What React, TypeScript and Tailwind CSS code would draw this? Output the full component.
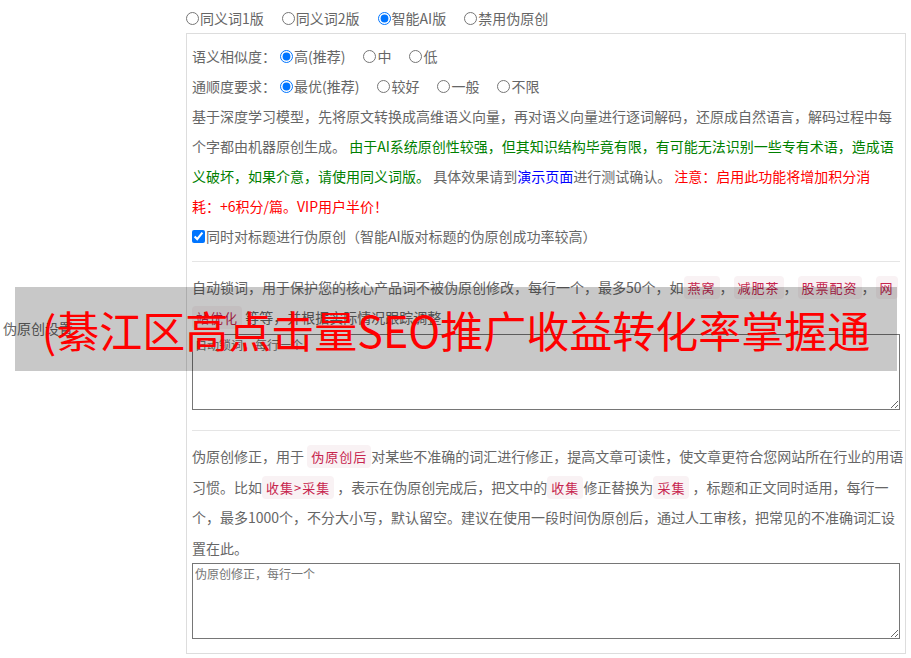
import React from "react";

function Radio({ name, label, checked }: { name: string; label: string; checked?: boolean }) {
  return (
    <label className="inline-flex items-center mr-[18px]">
      <input type="radio" name={name} defaultChecked={checked} className="m-0 mr-[1px] w-[13px] h-[13px]" />
      <span>{label}</span>
    </label>
  );
}

function Code({ children }: { children: React.ReactNode }) {
  return (
    <span className="bg-[#f9f2f4] text-[#c7254e] rounded-[4px] px-[4px] py-[2px] text-[13px] leading-none tracking-[1px]">
      {children}
    </span>
  );
}

export default function App() {
  return (
    <div className="relative w-[911px] h-[658px] bg-white text-[#666] text-[14px] font-['Noto_Sans_CJK_SC','Noto_Sans',sans-serif] overflow-hidden">
      <div className="flex">
        <div className="w-[186px] shrink-0 flex items-center pl-[3px] pt-[2px]">伪原创设置</div>
        <div className="w-[720px] shrink-0">
          <div className="mt-[3px] h-[30px] flex items-center">
            <Radio name="ver" label="同义词1版" />
            <Radio name="ver" label="同义词2版" />
            <Radio name="ver" label="智能AI版" checked />
            <Radio name="ver" label="禁用伪原创" />
          </div>
          <div className="border border-[#ddd] px-[5px] pt-[7px] pb-[14px]">
            <div className="h-[30px] flex items-center">
              <span className="mr-[4px]">语义相似度：</span>
              <Radio name="sim" label="高(推荐)" checked />
              <Radio name="sim" label="中" />
              <Radio name="sim" label="低" />
            </div>
            <div className="h-[30px] flex items-center">
              <span className="mr-[4px]">通顺度要求：</span>
              <Radio name="flu" label="最优(推荐)" checked />
              <Radio name="flu" label="较好" />
              <Radio name="flu" label="一般" />
              <Radio name="flu" label="不限" />
            </div>
            <div className="leading-[30px] whitespace-nowrap">
              <div className="h-[30px]">基于深度学习模型，先将原文转换成高维语义向量，再对语义向量进行逐词解码，还原成自然语言，解码过程中每</div>
              <div className="h-[30px]">
                个字都由机器原创生成。
                <span className="text-[#008000]"> 由于AI系统原创性较强，但其知识结构毕竟有限，有可能无法识别一些专有术语，造成语</span>
              </div>
              <div className="h-[30px]">
                <span className="text-[#008000]">义破坏，如果介意，请使用同义词版。</span> 具体效果请到
                <span className="text-[#0000ff]">演示页面</span>进行测试确认。
                <span className="text-[#ff0000]"> 注意：启用此功能将增加积分消</span>
              </div>
              <div className="h-[30px] text-[#ff0000]">耗：+6积分/篇。VIP用户半价！</div>
            </div>
            <div className="h-[30px] flex items-center">
              <input type="checkbox" defaultChecked className="m-0 mr-[1px] w-[13px] h-[13px]" />
              <span>同时对标题进行伪原创（智能AI版对标题的伪原创成功率较高）</span>
            </div>
            <div className="mt-[10px] h-px bg-[#e5e5e5]" />
            <div className="mt-[10px] leading-[30px] whitespace-nowrap">
              <div className="h-[30px]">
                自动锁词，用于保护您的核心产品词不被伪原创修改，每行一个，最多50个，如<Code>燕窝</Code>，<Code>减肥茶</Code>，<Code>股票配资</Code>，<Code>网</Code>
              </div>
              <div className="h-[30px]">
                <Code>站优化</Code> 等等，并根据实际情况跟踪调整
              </div>
            </div>
            <textarea
              placeholder="自动锁词，每行一个"
              className="block mt-[2px] w-full h-[76px] border border-[#767676] p-[2px] text-[12px] leading-[16px] text-[#333] placeholder:text-[#757575]"
            />
            <div className="mt-[20px] h-px bg-[#e5e5e5]" />
            <div className="mt-[10px] leading-[30.5px] whitespace-nowrap">
              <div className="h-[30.5px]">
                伪原创修正，用于 <Code>伪原创后</Code>对某些不准确的词汇进行修正，提高文章可读性，使文章更符合您网站所在行业的用语
              </div>
              <div className="h-[30.5px]">
                习惯。比如<Code>收集&gt;采集</Code> ，表示在伪原创完成后，把文中的<Code>收集</Code>修正替换为<Code>采集</Code> ，标题和正文同时适用，每行一
              </div>
              <div className="h-[30.5px]">个，最多1000个，不分大小写，默认留空。建议在使用一段时间伪原创后，通过人工审核，把常见的不准确词汇设</div>
              <div className="h-[30.5px]">置在此。</div>
            </div>
            <textarea
              placeholder="伪原创修正，每行一个"
              className="block mt-0 w-full h-[76px] border border-[#767676] p-[2px] text-[12px] leading-[16px] text-[#333] placeholder:text-[#757575]"
            />
          </div>
        </div>
      </div>
      <div className="absolute left-[15px] top-[287px] w-[882px] h-[84px] bg-[rgba(0,0,0,0.216)] flex items-center justify-center">
        <span className="text-[#ff0000] text-[43px] leading-none whitespace-nowrap">(綦江区高点击量SEO推广收益转化率掌握通</span>
      </div>
    </div>
  );
}
